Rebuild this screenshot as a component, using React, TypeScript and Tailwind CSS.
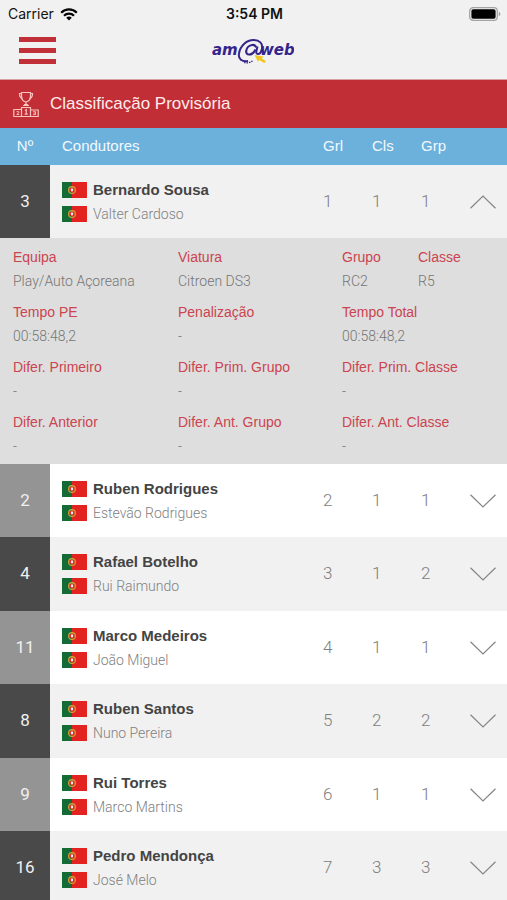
import { Fragment, useState } from "react"
import clsx from "clsx"

interface Crew {
  num: number
  driver: string
  codriver: string
  grl: number
  cls: number
  grp: number
  details: { label: string; value: string }[]
}

const makeDetails = (equipa = "-", viatura = "-", grupo = "-", classe = "-", tempo = "-") => [
  { label: "Equipa", value: equipa },
  { label: "Viatura", value: viatura },
  { label: "Grupo", value: grupo },
  { label: "Classe", value: classe },
  { label: "Tempo PE", value: tempo },
  { label: "Penalização", value: "-" },
  { label: "Tempo Total", value: tempo },
  { label: "Difer. Primeiro", value: "-" },
  { label: "Difer. Prim. Grupo", value: "-" },
  { label: "Difer. Prim. Classe", value: "-" },
  { label: "Difer. Anterior", value: "-" },
  { label: "Difer. Ant. Grupo", value: "-" },
  { label: "Difer. Ant. Classe", value: "-" },
]

const crews: Crew[] = [
  { num: 3, driver: "Bernardo Sousa", codriver: "Valter Cardoso", grl: 1, cls: 1, grp: 1, details: makeDetails("Play/Auto Açoreana", "Citroen DS3", "RC2", "R5", "00:58:48,2") },
  { num: 2, driver: "Ruben Rodrigues", codriver: "Estevão Rodrigues", grl: 2, cls: 1, grp: 1, details: makeDetails() },
  { num: 4, driver: "Rafael Botelho", codriver: "Rui Raimundo", grl: 3, cls: 1, grp: 2, details: makeDetails() },
  { num: 11, driver: "Marco Medeiros", codriver: "João Miguel", grl: 4, cls: 1, grp: 1, details: makeDetails() },
  { num: 8, driver: "Ruben Santos", codriver: "Nuno Pereira", grl: 5, cls: 2, grp: 2, details: makeDetails() },
  { num: 9, driver: "Rui Torres", codriver: "Marco Martins", grl: 6, cls: 1, grp: 1, details: makeDetails() },
  { num: 16, driver: "Pedro Mendonça", codriver: "José Melo", grl: 7, cls: 3, grp: 3, details: makeDetails() },
]

function Flag() {
  return (
    <svg viewBox="0 0 25 16" className="w-[25px] h-4 shrink-0" aria-hidden="true">
      <rect width="25" height="16" fill="#e2231f" />
      <rect width="10" height="16" fill="#146b36" />
      <circle cx="10" cy="8" r="3.4" fill="none" stroke="#cfa63a" strokeWidth="1.1" />
      <path d="M6.5 8h7M10 4.6v6.8" stroke="#c9a536" strokeWidth="0.6" />
      <path d="M8 5.9h4v2.6a2 2 0 0 1-4 0z" fill="#e2231f" />
      <path d="M8.9 6.6h2.2v1.8a1.1 1.1 0 0 1-2.2 0z" fill="#eceaf2" />
    </svg>
  )
}

function WifiIcon() {
  return (
    <svg viewBox="0 0 18 13" className="w-[18px] h-[13px]" fill="none" stroke="#050505" strokeWidth="2.2" aria-hidden="true">
      <path d="M1.2 4.7a11 11 0 0 1 15.6 0" />
      <path d="M4 7.7a7 7 0 0 1 10 0" />
      <path d="M9 12.6L6.2 9.8a4 4 0 0 1 5.6 0z" fill="#050505" stroke="none" />
    </svg>
  )
}

function BatteryIcon() {
  return (
    <svg viewBox="0 0 32 14" className="w-8 h-3.5" aria-hidden="true">
      <rect x="0.7" y="0.7" width="27.6" height="12.6" rx="3.4" fill="none" stroke="#a3a3a3" strokeWidth="1.3" />
      <rect x="2.4" y="2.3" width="24.2" height="9.4" rx="1.8" fill="#000" />
      <path d="M29.8 4.8q1.6 0.8 1.6 2.2t-1.6 2.2z" fill="#9a9a9a" />
    </svg>
  )
}

function Logo() {
  return (
    <svg viewBox="0 0 82 26" className="w-[82px] h-[26px]" role="img" aria-label="am@web">
      <g fill="#35248a" fontFamily="'DejaVu Sans', sans-serif" fontWeight="700" fontStyle="italic">
        <text x="0" y="17" fontSize="15">am</text>
        <text x="48" y="17" fontSize="15">web</text>
      </g>
      <path d="M36 23c-6 1-10-2-9-7.500C28 8 34.500 2 41.500 2c6 0 9.500 3.500 8.500 8.500-.6 3-1.500 5.500-4 5.500-1.600 0-2-1.200-1.500-3.200l1-4.300" fill="none" stroke="#35248a" strokeWidth="2" />
      <path d="M44.200 9.500c-.6-2-2-2.700-4-2.500-3.200.4-5.700 3-6 6-.2 2.200 1 3.600 3 3.500 2.700 0 5-2.300 6.300-5" fill="none" stroke="#35248a" strokeWidth="2.200" />
      <path d="M32 24.500c3 .8 6 .3 8.500-1.500" fill="none" stroke="#35248a" strokeWidth="1.200" strokeDasharray="1.500 1" />
      <path d="M42.500 17l9.500 1.800-2.400 1.500 4.500 3-2 1.700-4.800-3-1.300 1.700z" fill="#f2c71d" />
    </svg>
  )
}

function PodiumIcon() {
  return (
    <svg viewBox="0 0 26 27" className="w-[26px] h-[27px] shrink-0" fill="none" stroke="#f9c4bf" strokeWidth="1.200" aria-hidden="true">
      <path d="M8.500 1.500h9v3.500c0 3-1.800 5.500-4.500 6-2.700-.5-4.500-3-4.500-6z" />
      <path d="M8.500 2.500H6.500c0 2.800 1 4.500 3 5M17.500 2.500h2c0 2.800-1 4.500-3 5M13 11v2.500M10 14.500h6M11 13.500h4" />
      <path d="M8.500 25.500v-9h9v9M8.500 18.500H.8v7h24.400v-6.500h-7.700" />
      <path d="M12 19.500l1.200-.8v4.500M11.700 23.200h3" />
      <path d="M3.500 20.700h2.300v1.200L3.700 23.500h2.500M20 20.700h2.500v3H20M20.500 22.200h2" strokeWidth="0.900" />
    </svg>
  )
}

function Chevron({ open }: { open: boolean }) {
  return (
    <svg viewBox="0 0 26 14" className={clsx("w-[26px] h-3.5", open && "rotate-180")} fill="none" stroke="#858585" strokeWidth="1.200" aria-hidden="true">
      <path d="M0.500 0.700L13 13L25.500 0.700" />
    </svg>
  )
}

function Details({ crew }: { crew: Crew }) {
  return (
    <dl className="grid grid-cols-[165fr_164fr_76fr_76fr] gap-y-[7px] px-[13px] pt-[7px] pb-1.5 text-sm leading-6">
      {crew.details.map((d, i) => (
        <div key={d.label} className={clsx("whitespace-nowrap", i > 3 && i % 3 === 0 && "col-span-2")}>
          <dt className="font-['Liberation_Sans',sans-serif] text-[#cb4450]">{d.label}</dt>
          <dd className="font-light text-[#757575]">{d.value}</dd>
        </div>
      ))}
    </dl>
  )
}

export default function App() {
  const [openNum, setOpenNum] = useState<number | null>(3)

  return (
    <div className="min-h-screen bg-white font-[Roboto,'Liberation_Sans',sans-serif]">
      {/* Status bar */}
      <div className="grid grid-cols-3 items-center h-7 pl-2 pr-1.5 bg-[#f1f1f1] font-[Inter,sans-serif] text-sm text-[#111]">
        <div className="flex items-center gap-1.5">
          <span>Carrier</span>
          <WifiIcon />
        </div>
        <span className="text-center font-semibold">3:54 PM</span>
        <div className="flex justify-end">
          <BatteryIcon />
        </div>
      </div>

      {/* Header */}
      <header className="grid grid-cols-3 items-center h-[51px] px-[19px] pb-1.5 bg-[#f1f1f1]">
        <button className="flex flex-col justify-between w-[37px] h-[27px]" aria-label="Menu">
          <span className="w-full h-[5px] bg-[#c12f38]" />
          <span className="w-full h-[5px] bg-[#c12f38]" />
          <span className="w-full h-[5px] bg-[#c12f38]" />
        </button>
        <div className="flex justify-center">
          <Logo />
        </div>
      </header>

      {/* Title */}
      <div className="flex items-center gap-[11px] h-[49px] pl-[13px] bg-[#c22e36] border-t border-[#d9a0a3]">
        <PodiumIcon />
        <h1 className="font-['Liberation_Sans',sans-serif] text-[17px] text-[#fdeceb]">Classificação Provisória</h1>
      </div>

      <table className="w-full table-fixed border-collapse text-left">
        <colgroup>
          <col className="w-[50px]" />
          <col />
          <col className="w-[49px]" />
          <col className="w-[49px]" />
          <col className="w-[49px]" />
          <col className="w-[37px]" />
        </colgroup>
        <thead className="bg-[#6cb0dc] font-['Liberation_Sans',sans-serif] text-[15px] text-[#f3f9fd]">
          <tr className="h-[37px]">
            <th className="text-center font-normal">Nº</th>
            <th className="pl-3 font-normal">Condutores</th>
            <th className="font-normal">Grl</th>
            <th className="font-normal">Cls</th>
            <th className="font-normal">Grp</th>
            <th />
          </tr>
        </thead>
        <tbody>
          {crews.map((c, i) => {
            const open = openNum === c.num
            const dark = i % 2 === 0
            return (
              <Fragment key={c.num}>
                <tr
                  className={clsx(
                    "text-[17px] font-light text-[#808080]",
                    dark ? "bg-[#f1f1f1]" : "bg-white",
                    dark && !open ? "h-[74px]" : "h-[73px]"
                  )}
                >
                  <td className={clsx("text-center font-normal text-[#f0f0f0]", dark ? "bg-[#494949]" : "bg-[#949494]")}>{c.num}</td>
                  <td className="pl-3 text-sm leading-6">
                    <div className="flex items-center gap-1.5">
                      <Flag />
                      <span className="font-['Liberation_Sans',sans-serif] text-[15px] font-bold text-[#444]">{c.driver}</span>
                    </div>
                    <div className="flex items-center gap-1.5">
                      <Flag />
                      <span>{c.codriver}</span>
                    </div>
                  </td>
                  <td>{c.grl}</td>
                  <td>{c.cls}</td>
                  <td>{c.grp}</td>
                  <td>
                    <button
                      className="flex items-center h-11 cursor-pointer"
                      aria-expanded={open}
                      aria-label={c.driver}
                      onClick={() => setOpenNum(open ? null : c.num)}
                    >
                      <Chevron open={open} />
                    </button>
                  </td>
                </tr>
                {open && (
                  <tr className="bg-[#dedede]">
                    <td colSpan={6}>
                      <Details crew={c} />
                    </td>
                  </tr>
                )}
              </Fragment>
            )
          })}
        </tbody>
      </table>
    </div>
  )
}
